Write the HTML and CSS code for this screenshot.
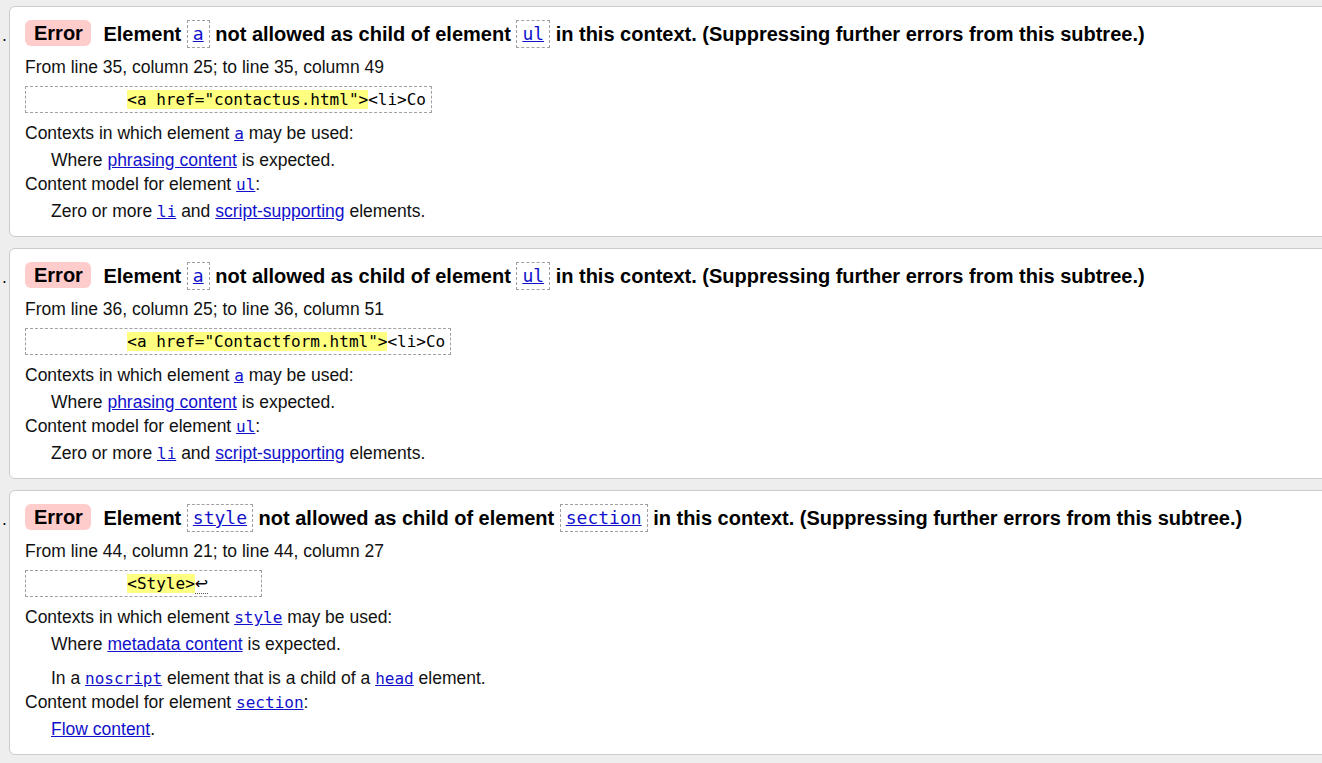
FILE: index.html
```html
<!DOCTYPE html>
<html lang="en">
<head>
<meta charset="utf-8">
<title>Validation messages</title>
<link rel="stylesheet" href="styles.css">
</head>
<body>
<ol class="messages">
  <li class="msg">
    <span class="marker">.</span>
    <div class="card">
      <p class="title"><strong class="badge">Error</strong> Element <code class="tag"><a href="#">a</a></code> not allowed as child of element <code class="tag"><a href="#">ul</a></code> in this context. (Suppressing further errors from this subtree.)</p>
      <p class="location">From line 35, column 25; to line 35, column 49</p>
      <p class="extract"><code>          <b class="hl">&lt;a href="contactus.html"&gt;</b>&lt;li&gt;Co</code></p>
      <dl class="details">
        <dt>Contexts in which element <a href="#"><code>a</code></a> may be used:</dt>
        <dd>Where <a href="#">phrasing content</a> is expected.</dd>
        <dt>Content model for element <a href="#"><code>ul</code></a>:</dt>
        <dd>Zero or more <a href="#"><code>li</code></a> and <a href="#">script-supporting</a> elements.</dd>
      </dl>
    </div>
  </li>
  <li class="msg">
    <span class="marker">.</span>
    <div class="card">
      <p class="title"><strong class="badge">Error</strong> Element <code class="tag"><a href="#">a</a></code> not allowed as child of element <code class="tag"><a href="#">ul</a></code> in this context. (Suppressing further errors from this subtree.)</p>
      <p class="location">From line 36, column 25; to line 36, column 51</p>
      <p class="extract"><code>          <b class="hl">&lt;a href="Contactform.html"&gt;</b>&lt;li&gt;Co</code></p>
      <dl class="details">
        <dt>Contexts in which element <a href="#"><code>a</code></a> may be used:</dt>
        <dd>Where <a href="#">phrasing content</a> is expected.</dd>
        <dt>Content model for element <a href="#"><code>ul</code></a>:</dt>
        <dd>Zero or more <a href="#"><code>li</code></a> and <a href="#">script-supporting</a> elements.</dd>
      </dl>
    </div>
  </li>
  <li class="msg">
    <span class="marker">.</span>
    <div class="card">
      <p class="title"><strong class="badge">Error</strong> Element <code class="tag"><a href="#">style</a></code> not allowed as child of element <code class="tag"><a href="#">section</a></code> in this context. (Suppressing further errors from this subtree.)</p>
      <p class="location">From line 44, column 21; to line 44, column 27</p>
      <p class="extract"><code>          <b class="hl">&lt;Style&gt;</b><span class="lf" title="Line break">↩</span>     </code></p>
      <dl class="details">
        <dt>Contexts in which element <a href="#"><code>style</code></a> may be used:</dt>
        <dd>Where <a href="#">metadata content</a> is expected.</dd>
        <dd class="extra">In a <a href="#"><code>noscript</code></a> element that is a child of a <a href="#"><code>head</code></a> element.</dd>
        <dt>Content model for element <a href="#"><code>section</code></a>:</dt>
        <dd><a href="#">Flow content</a>.</dd>
      </dl>
    </div>
  </li>
</ol>
</body>
</html>
```

FILE: styles.css
```css
html, body {
  margin: 0;
  padding: 0;
  background: #eeeeee;
  overflow: hidden;
}

body {
  font-family: "Liberation Sans", Arial, sans-serif;
  font-size: 17.5px;
  color: #111;
}

.messages {
  list-style: none;
  margin: 0;
  padding: 6px 0 0 0;
  display: flex;
  flex-direction: column;
  gap: 11px;
}

.msg {
  display: flex;
  align-items: baseline;
  margin-right: -30px;
}

.marker {
  width: 9px;
  flex: none;
  font-size: 17.5px;
  padding-left: 2px;
  box-sizing: border-box;
}

.card {
  flex: 1;
  background: #fff;
  border: 1px solid #cccccc;
  border-radius: 6px;
  padding: 13px 15px 13px 15px;
}

a {
  color: #1111cc;
  text-decoration: underline;
}

code {
  font-family: "DejaVu Sans Mono", "Liberation Mono", monospace;
}

.title {
  margin: 0;
  font-size: 20px;
  font-weight: bold;
  line-height: 28px;
  color: #000;
  white-space: nowrap;
}

.badge {
  display: inline-block;
  vertical-align: top;
  background: #ffcccc;
  border-radius: 6px;
  padding: 0 8px 0 9px;
  line-height: 26px;
  margin-right: 7px;
  font-weight: bold;
  color: #000;
}

.tag {
  display: inline-block;
  vertical-align: top;
  font-size: 18px;
  font-weight: normal;
  line-height: 26px;
  padding: 0 5px;
  border: 1px dashed #a0a0a0;
}

.location {
  margin: 7px 0 0 0;
  line-height: 24px;
}

.extract {
  margin: 7px 0 0 0;
}

.extract code {
  display: block;
  width: fit-content;
  font-size: 16px;
  line-height: 25px;
  white-space: pre;
  padding: 0 5px;
  border: 1px dashed #a0a0a0;
  color: #000;
}

.hl {
  font-weight: normal;
  background: #ffff80;
}

.lf {
  font-family: "DejaVu Sans", sans-serif;
  font-size: 16px;
  border-bottom: 1px dotted #555;
}

.details {
  margin: 8px 0 0 0;
  line-height: 24px;
}

.details dt {
  margin: 0;
  height: 24px;
}

.details dd {
  margin: 3px 0 0 26px;
  height: 24px;
}

.details dd.extra {
  margin-top: 10px;
}

.details code {
  font-size: 16px;
  line-height: 1;
}
```
